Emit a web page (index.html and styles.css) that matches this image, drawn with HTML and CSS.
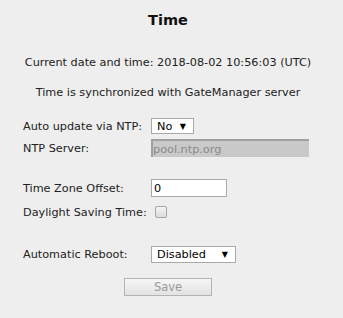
FILE: index.html
```html
<!DOCTYPE html>
<html lang="en">
<head>
    <meta charset="UTF-8">
    <title>Time</title>
    <link rel="stylesheet" href="styles.css">
</head>
<body>
    <div class="page">
        <h1>Time</h1>
        <p class="info">Current date and time: 2018-08-02 10:56:03 (UTC)</p>
        <p class="info">Time is synchronized with GateManager server</p>

        <div class="form">
            <div class="row">
                <label>Auto update via NTP:</label>
                <div class="select select-ntp"><span>No</span><span class="arrow">&#9660;</span></div>
            </div>
            <div class="row">
                <label>NTP Server:</label>
                <input type="text" class="text-input server" value="pool.ntp.org" disabled>
            </div>

            <div class="row spaced">
                <label>Time Zone Offset:</label>
                <input type="text" class="text-input offset" value="0">
            </div>
            <div class="row dst">
                <label>Daylight Saving Time:</label>
                <input type="checkbox" class="check">
            </div>

            <div class="row spaced reboot">
                <label>Automatic Reboot:</label>
                <div class="select select-reboot"><span>Disabled</span><span class="arrow">&#9660;</span></div>
            </div>
        </div>

        <div class="actions">
            <button class="save" disabled>Save</button>
        </div>
    </div>
</body>
</html>
```

FILE: styles.css
```css
body {
    margin: 0;
    background-color: #eeeeee;
    font-family: 'DejaVu Sans', Verdana, sans-serif;
    font-size: 11.25px;
    color: #222;
}

.page {
    width: 336px;
    height: 318px;
}

h1 {
    margin: 0;
    padding-top: 10px;
    line-height: 20px;
    font-size: 14.5px;
    font-weight: bold;
    text-align: center;
    color: #111;
}

.info {
    margin: 0;
    line-height: 18px;
    text-align: center;
}

.info:first-of-type {
    margin-top: 24px;
}

.info + .info {
    margin-top: 12px;
}

.form {
    margin-top: 13px;
    padding-left: 23px;
}

.row {
    display: flex;
    align-items: center;
    height: 22px;
}

.row.spaced {
    margin-top: 18px;
}

.row.dst {
    margin-top: 2px;
}

.row.reboot {
    margin-top: 20px;
}

.row label {
    width: 128px;
}

.select {
    box-sizing: border-box;
    height: 16px;
    display: flex;
    align-items: center;
    justify-content: space-between;
    padding: 0 7px 0 5px;
    background: #fff;
    border: 1px solid #a9a9a9;
    color: #000;
}

.select .arrow {
    font-size: 8px;
}

.select-ntp {
    width: 43px;
}

.select-reboot {
    width: 85px;
    height: 17px;
}

.text-input {
    box-sizing: border-box;
    margin: 0;
    padding: 0 2px;
    font-family: inherit;
    font-size: inherit;
    height: 18px;
    border: 1px solid #a9a9a9;
    background: #fff;
    color: #000;
}

.text-input.server {
    width: 158px;
    background: #c9c9c9;
    color: #8a8a8a;
    border-color: #a0a0a0 #c9c9c9 #c9c9c9 #a0a0a0;
    border-width: 2px 0 0 2px;
    padding-left: 0;
}

.text-input.offset {
    width: 76px;
}

.check {
    appearance: none;
    box-sizing: border-box;
    width: 12px;
    height: 12px;
    margin: 0 0 0 4px;
    border: 1px solid #a6a6a6;
    border-radius: 2px;
    background: linear-gradient(#f4f4f4, #dcdcdc);
}

.actions {
    margin-top: 13px;
    padding-left: 124px;
}

.save {
    box-sizing: border-box;
    width: 88px;
    height: 18px;
    padding: 0;
    font-family: inherit;
    font-size: 11.5px;
    color: #9a9a9a;
    border: 1px solid #b3b3b3;
    background: linear-gradient(#f6f6f6, #e2e2e2);
}
```
